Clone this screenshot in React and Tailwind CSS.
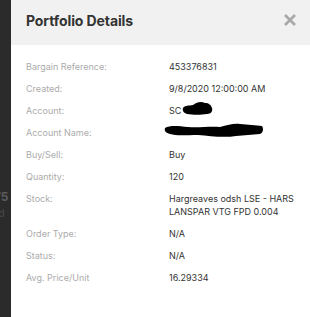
import React from "react";

const rows = [
  ["Bargain Reference:", "453376831"],
  ["Created:", "9/8/2020 12:00:00 AM"],
  ["Account:", "acct"],
  ["Account Name:", "name"],
  ["Buy/Sell:", "Buy"],
  ["Quantity:", "120"],
  ["Stock:", "Hargreaves odsh LSE - HARS LANSPAR VTG FPD 0.004"],
  ["Order Type:", "N/A"],
  ["Status:", "N/A"],
  ["Avg. Price/Unit", "16.29334"],
];

function Value({ v }) {
  if (v === "acct") {
    return (
      <div className="relative h-[13px]">
        <span>SC</span>
        <svg className="absolute left-[12px] top-[-5px]" width="34" height="20" viewBox="0 0 34 20">
          <path d="M2 9 C4 6 8 7 12 6 C16 3 20 2 24 4 C28 4 30 6 31 9 C32 12 30 15 26 15 C20 16 12 16 6 15 C3 14 1 12 2 9 Z" fill="#000" />
        </svg>
      </div>
    );
  }
  if (v === "name") {
    return (
      <div className="relative h-[13px]">
        <svg className="absolute left-[-5px] top-[-6px]" width="100" height="20" viewBox="0 0 100 20">
          <path d="M1 8 C6 5 14 6 24 7 C34 8 46 6 56 7 C64 5 70 3 76 4 C84 5 92 5 98 6 C100 9 99 13 96 14 C88 15 80 15 72 16 C60 18 46 16 34 15 C22 15 12 16 6 14 C2 13 0 11 1 8 Z" fill="#000" />
        </svg>
      </div>
    );
  }
  return <div>{v}</div>;
}

export default function App() {
  return (
    <div
      className="flex h-[317px] w-[310px] overflow-hidden bg-[#2b2b2b]"
      style={{ fontFamily: "Inter, 'Noto Sans', sans-serif" }}
    >
      <div className="relative w-[11px] shrink-0 overflow-hidden">
        <div className="absolute left-[-6px] top-[188px] text-[12px] font-bold text-[#5a5a5a]">75</div>
        <div className="absolute left-[-4px] top-[206px] text-[10px] text-[#4a4a4a]">ld</div>
      </div>
      <div className="flex flex-1 flex-col bg-white">
        <div className="flex h-[45px] items-center justify-between bg-[#f1f1f1] pl-[15px] pr-[13px]">
          <div className="pb-[5px] text-[14px] font-bold tracking-[-0.1px] text-[#333]">Portfolio Details</div>
          <svg className="mb-[6px]" width="14" height="14" viewBox="0 0 14 14">
            <path d="M2 2 L12 12 M12 2 L2 12" stroke="#a8a8a8" strokeWidth="2.6" strokeLinecap="butt" />
          </svg>
        </div>
        <div className="flex flex-col gap-[9px] pl-[15px] pt-[15px] text-[9px] leading-[13px]">
          {rows.map(([l, v]) => (
            <div key={l} className="flex">
              <div className="w-[143px] shrink-0 text-[#ababab]">{l}</div>
              <div className="w-[130px] text-[#333]">
                <Value v={v} />
              </div>
            </div>
          ))}
        </div>
      </div>
    </div>
  );
}
